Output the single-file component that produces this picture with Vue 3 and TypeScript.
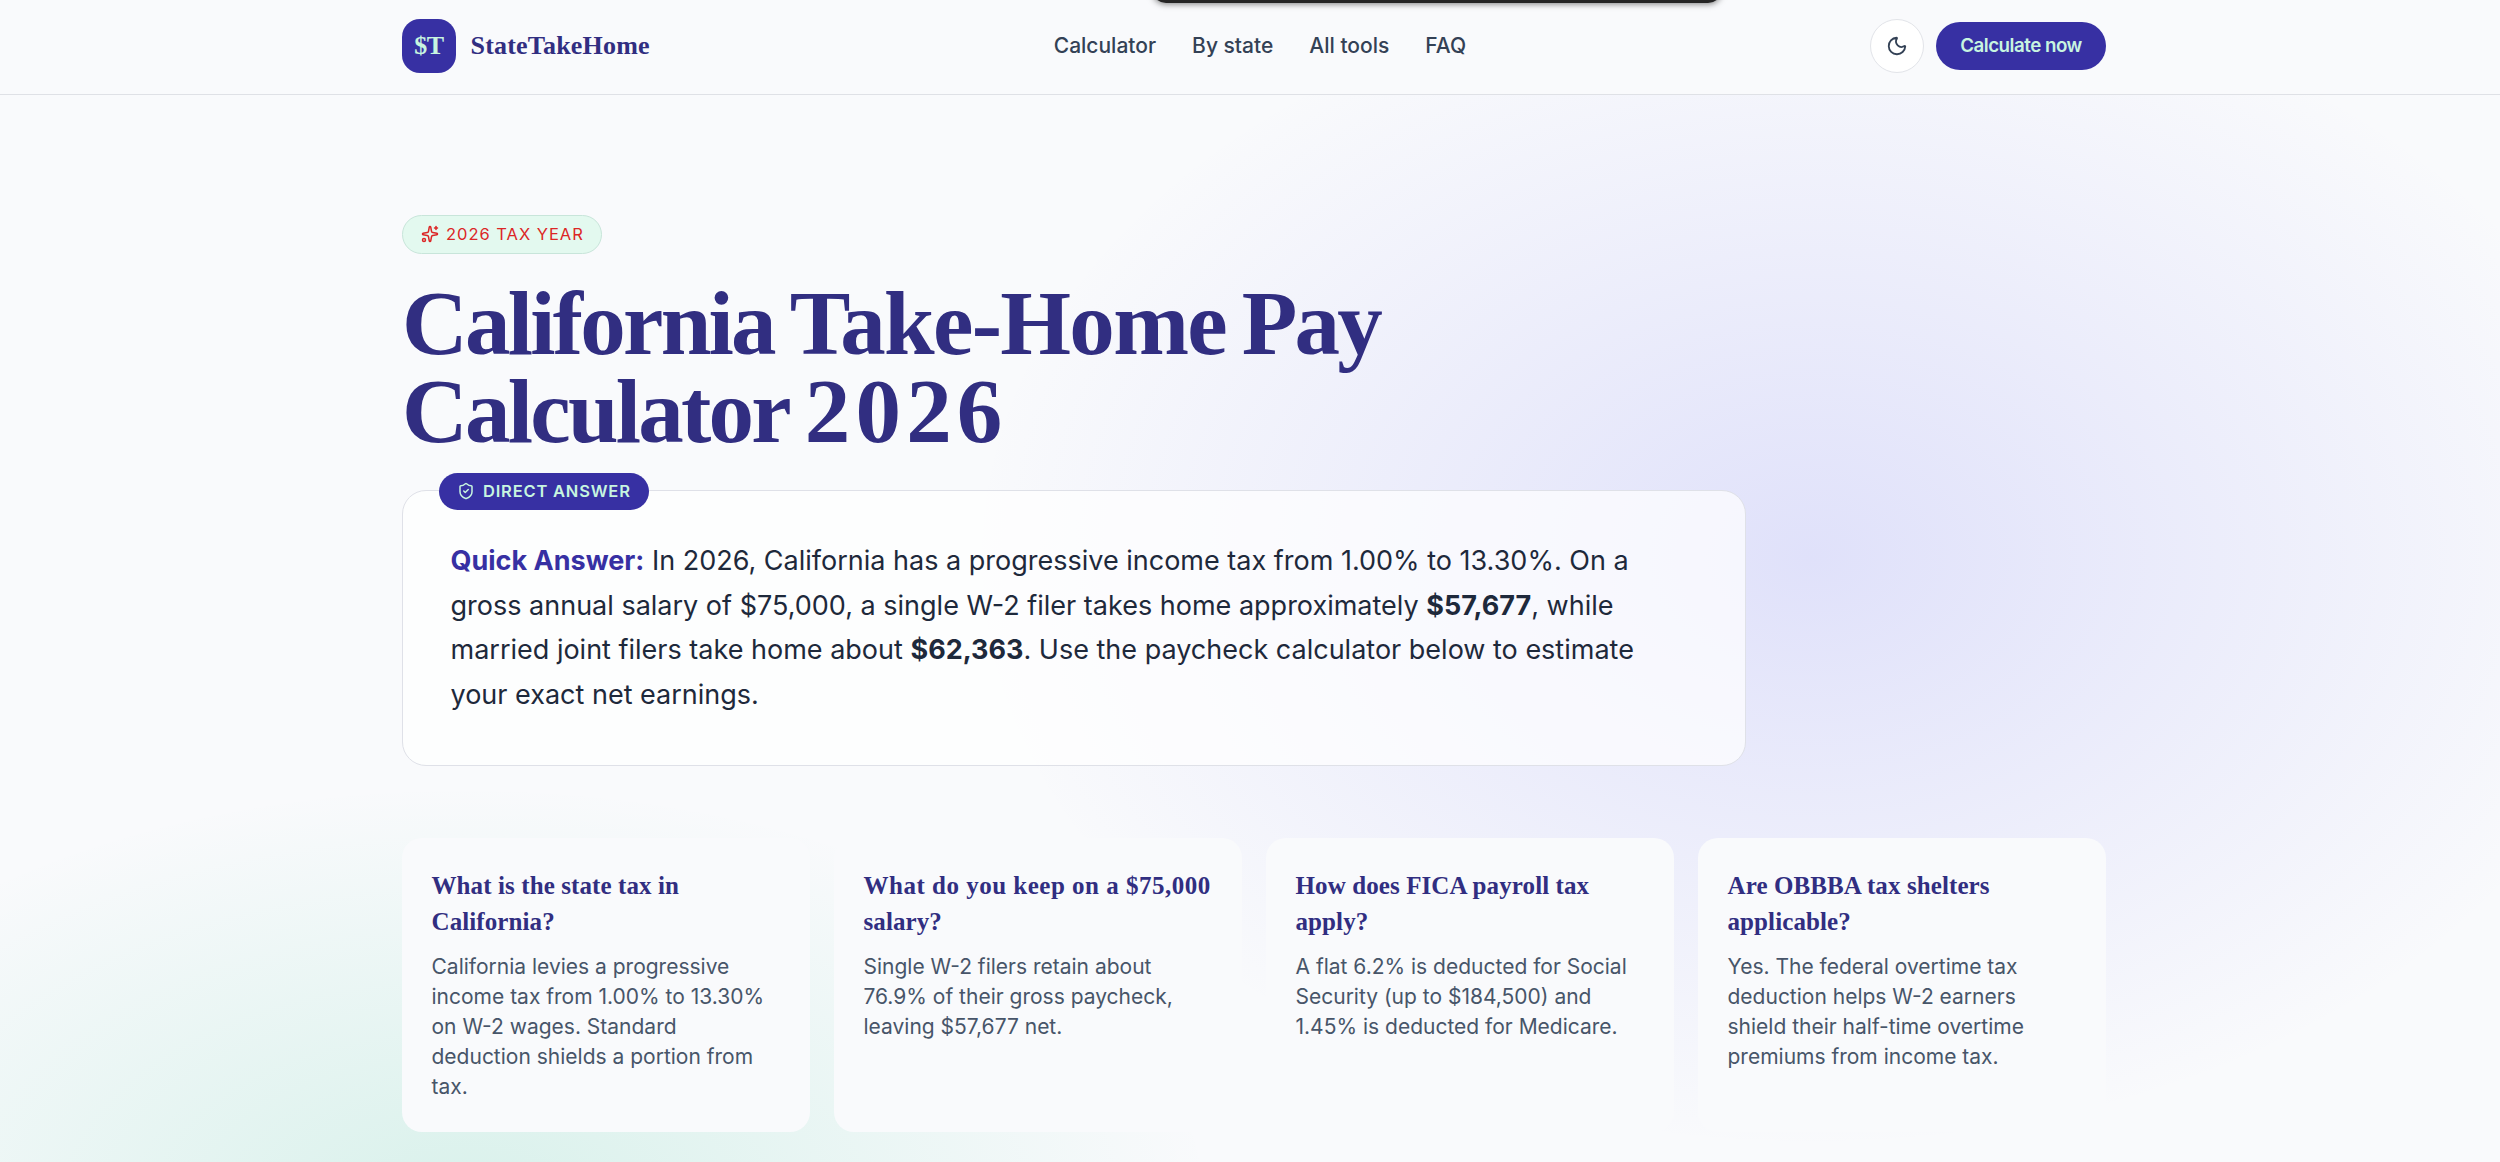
<script setup lang="ts">
interface FaqCard {
  id: string
  title: string[]
  body: string[]
}

const navLinks = ['Calculator', 'By state', 'All tools', 'FAQ']

const cards: FaqCard[] = [
  {
    id: 'state',
    title: ['What is the state tax in', 'California?'],
    body: [
      'California levies a progressive',
      'income tax from 1.00% to 13.30%',
      'on W-2 wages. Standard',
      'deduction shields a portion from',
      'tax.',
    ],
  },
  {
    id: 'keep',
    title: ['What do you keep on a $75,000', 'salary?'],
    body: ['Single W-2 filers retain about', '76.9% of their gross paycheck,', 'leaving $57,677 net.'],
  },
  {
    id: 'fica',
    title: ['How does FICA payroll tax', 'apply?'],
    body: ['A flat 6.2% is deducted for Social', 'Security (up to $184,500) and', '1.45% is deducted for Medicare.'],
  },
  {
    id: 'obbba',
    title: ['Are OBBBA tax shelters', 'applicable?'],
    body: [
      'Yes. The federal overtime tax',
      'deduction helps W-2 earners',
      'shield their half-time overtime',
      'premiums from income tax.',
    ],
  },
]
</script>

<template>
  <div class="page">
    <div class="top-notch" />

    <header class="site-header">
      <div class="container header-inner">
        <a class="brand">
          <span class="brand-mark">$T</span>
          <span class="brand-name">StateTakeHome</span>
        </a>

        <nav class="site-nav">
          <a v-for="link in navLinks" :key="link">{{ link }}</a>
        </nav>

        <div class="header-actions">
          <button class="theme-toggle" type="button" aria-label="Toggle theme">
            <svg viewBox="0 0 24 24" class="icon icon-moon">
              <path d="M20.985 12.486a9 9 0 1 1-9.473-9.472c.405-.022.617.46.402.803a6 6 0 0 0 8.268 8.268c.344-.215.825-.004.803.401" />
            </svg>
          </button>
          <button class="cta" type="button">Calculate now</button>
        </div>
      </div>
    </header>

    <main class="container hero">
      <div class="year-pill">
        <svg viewBox="0 0 24 24" class="icon icon-small">
          <path d="M11.017 2.814a1 1 0 0 1 1.966 0l1.051 5.558a2 2 0 0 0 1.594 1.594l5.558 1.051a1 1 0 0 1 0 1.966l-5.558 1.051a2 2 0 0 0-1.594 1.594l-1.051 5.558a1 1 0 0 1-1.966 0l-1.051-5.558a2 2 0 0 0-1.594-1.594l-5.558-1.051a1 1 0 0 1 0-1.966l5.558-1.051a2 2 0 0 0 1.594-1.594z" />
          <path d="M20 2v4" />
          <path d="M22 4h-4" />
          <circle cx="4" cy="20" r="2" />
        </svg>
        <span>2026 TAX YEAR</span>
      </div>

      <h1>
        <span class="tight">California</span> <span class="snug">Take-Home</span> <span class="tight">Pay</span><br>
        <span class="tight">Calculator</span> <span class="wide">2026</span>
      </h1>

      <section class="answer">
        <div class="answer-badge">
          <svg viewBox="0 0 24 24" class="icon icon-small">
            <path d="M20 13c0 5-3.5 7.5-7.66 8.95a1 1 0 0 1-.67-.01C7.5 20.5 4 18 4 13V6a1 1 0 0 1 1-1c2 0 4.5-1.2 6.24-2.72a1.17 1.17 0 0 1 1.52 0C14.51 3.81 17 5 19 5a1 1 0 0 1 1 1z" />
            <path d="m9 12 2 2 4-4" />
          </svg>
          <span>DIRECT ANSWER</span>
        </div>
        <p>
          <strong class="accent">Quick Answer:</strong> In 2026, California has a progressive income tax from 1.00% to 13.30%. On a<br>
          gross annual salary of $75,000, a single W-2 filer takes home approximately <strong>$57,677</strong>, while<br>
          married joint filers take home about <strong>$62,363</strong>. Use the paycheck calculator below to estimate<br>
          your exact net earnings.
        </p>
      </section>

      <section class="card-grid">
        <article v-for="card in cards" :key="card.id" class="card">
          <h2 :class="`title-${card.id}`">
            <span v-for="line in card.title" :key="line">{{ line }}</span>
          </h2>
          <p>
            <span v-for="line in card.body" :key="line">{{ line }}</span>
          </p>
        </article>
      </section>
    </main>
  </div>
</template>

<style>
body {
  margin: 0;
  overflow: hidden;
}
</style>

<style scoped>
.page {
  position: relative;
  box-sizing: border-box;
  width: 2500px;
  height: 1162px;
  overflow: hidden;
  background:
    radial-gradient(ellipse 840px 590px at 1812px 558px, rgba(99, 102, 241, 0.17), rgba(99, 102, 241, 0) 100%),
    radial-gradient(ellipse 750px 425px at 465px 1210px, rgba(16, 185, 129, 0.14), rgba(16, 185, 129, 0) 100%),
    #f9fafc;
  color: #1e293b;
  font-family: Inter, "Liberation Sans", sans-serif;
}

.top-notch {
  position: absolute;
  top: -37px;
  left: 1152px;
  z-index: 2;
  width: 570px;
  height: 40px;
  border-radius: 14px;
  background: #252525;
  box-shadow: 0 1px 6px rgba(0, 0, 0, 0.5);
}

.container {
  width: 1704px;
  margin-left: 402px;
}

.site-header {
  box-sizing: border-box;
  height: 95px;
  border-bottom: 1px solid #dfe1e6;
  background: #f9fafc;
}

.header-inner {
  display: flex;
  align-items: center;
  justify-content: space-between;
  height: 92px;
}

.brand {
  display: flex;
  align-items: center;
  gap: 14.5px;
}

.brand-mark {
  display: grid;
  width: 54px;
  height: 54px;
  place-items: center;
  border-radius: 18px;
  background: #3730a3;
  color: #c7f5e0;
  font: 700 26px/1 "Liberation Serif", serif;
  letter-spacing: -0.5px;
}

.brand-name {
  color: #312e81;
  font: 700 26px/36px "Liberation Serif", serif;
  letter-spacing: 0.2px;
}

.site-nav {
  display: flex;
  gap: 36px;
  color: #334155;
  font-size: 21px;
  font-weight: 500;
  line-height: 30px;
}

.header-actions {
  display: flex;
  align-items: center;
  gap: 12px;
}

.theme-toggle {
  display: grid;
  box-sizing: border-box;
  width: 54px;
  height: 54px;
  padding: 0;
  place-items: center;
  border: 1px solid #e2e4e9;
  border-radius: 50%;
  background: #fff;
  color: #334155;
}

.cta {
  width: 170px;
  height: 48px;
  padding: 0;
  border: 0;
  border-radius: 24px;
  background: #3730a3;
  color: #c7f5e0;
  font: 600 18.75px/24px Inter, sans-serif;
  letter-spacing: -0.5px;
}

.icon {
  fill: none;
  stroke: currentColor;
  stroke-width: 2;
  stroke-linecap: round;
  stroke-linejoin: round;
}

.icon-moon {
  width: 22px;
  height: 22px;
}

.icon-small {
  width: 18px;
  height: 18px;
}

.hero {
  padding-top: 120px;
}

.year-pill {
  display: flex;
  align-items: center;
  box-sizing: border-box;
  width: 200px;
  height: 39px;
  padding: 0 0 1px 17.5px;
  gap: 7.5px;
  border: 1px solid #c8e5da;
  border-radius: 20px;
  background: #e3f9ef;
  color: #dc2626;
  font-size: 16.5px;
  font-weight: 400;
  letter-spacing: 0.98px;
  line-height: 24px;
  white-space: nowrap;
}

h1 {
  margin: 26px 0 0;
  color: #312e81;
  font: 700 91px/88px "Liberation Serif", serif;
  letter-spacing: -1px;
  word-spacing: -6px;
  white-space: nowrap;
}

.tight {
  letter-spacing: -2.75px;
}

.snug {
  letter-spacing: -1.7px;
}

.wide {
  letter-spacing: 5.2px;
}

.card span {
  display: block;
}

.answer {
  position: relative;
  box-sizing: border-box;
  width: 1344px;
  height: 276px;
  margin-top: 34px;
  padding: 48px 47.5px;
  border: 1px solid #dfe1e8;
  border-radius: 24px;
  background: rgba(255, 255, 255, 0.7);
}

.answer p {
  margin: 0;
  font-size: 27px;
  line-height: 44.6px;
  white-space: nowrap;
}

.answer strong {
  font-weight: 700;
}

.answer .accent {
  color: #3730a3;
}

.answer-badge {
  position: absolute;
  top: -18px;
  left: 36px;
  display: flex;
  align-items: center;
  box-sizing: border-box;
  width: 210px;
  height: 37px;
  padding: 0 0 1px 18px;
  gap: 8px;
  border-radius: 19px;
  background: #3730a3;
  color: #c7f5e0;
  font-size: 16.5px;
  font-weight: 600;
  letter-spacing: 0.8px;
  line-height: 24px;
  white-space: nowrap;
}

.card-grid {
  display: grid;
  grid-template-columns: repeat(4, 1fr);
  gap: 24px;
  margin-top: 72px;
}

.card {
  box-sizing: border-box;
  height: 294px;
  padding: 30px 29.5px;
  border-radius: 20px;
  background: #f9fafc;
  white-space: nowrap;
}

.card h2 {
  margin: 0;
  color: #312e81;
  font: 700 25px/36px "Liberation Serif", serif;
  letter-spacing: 0.1px;
}

.card .title-keep span:first-child {
  letter-spacing: 0.5px;
}

.card p {
  margin: 12px 0 0;
  color: #475569;
  font-size: 21px;
  line-height: 30px;
}
</style>
